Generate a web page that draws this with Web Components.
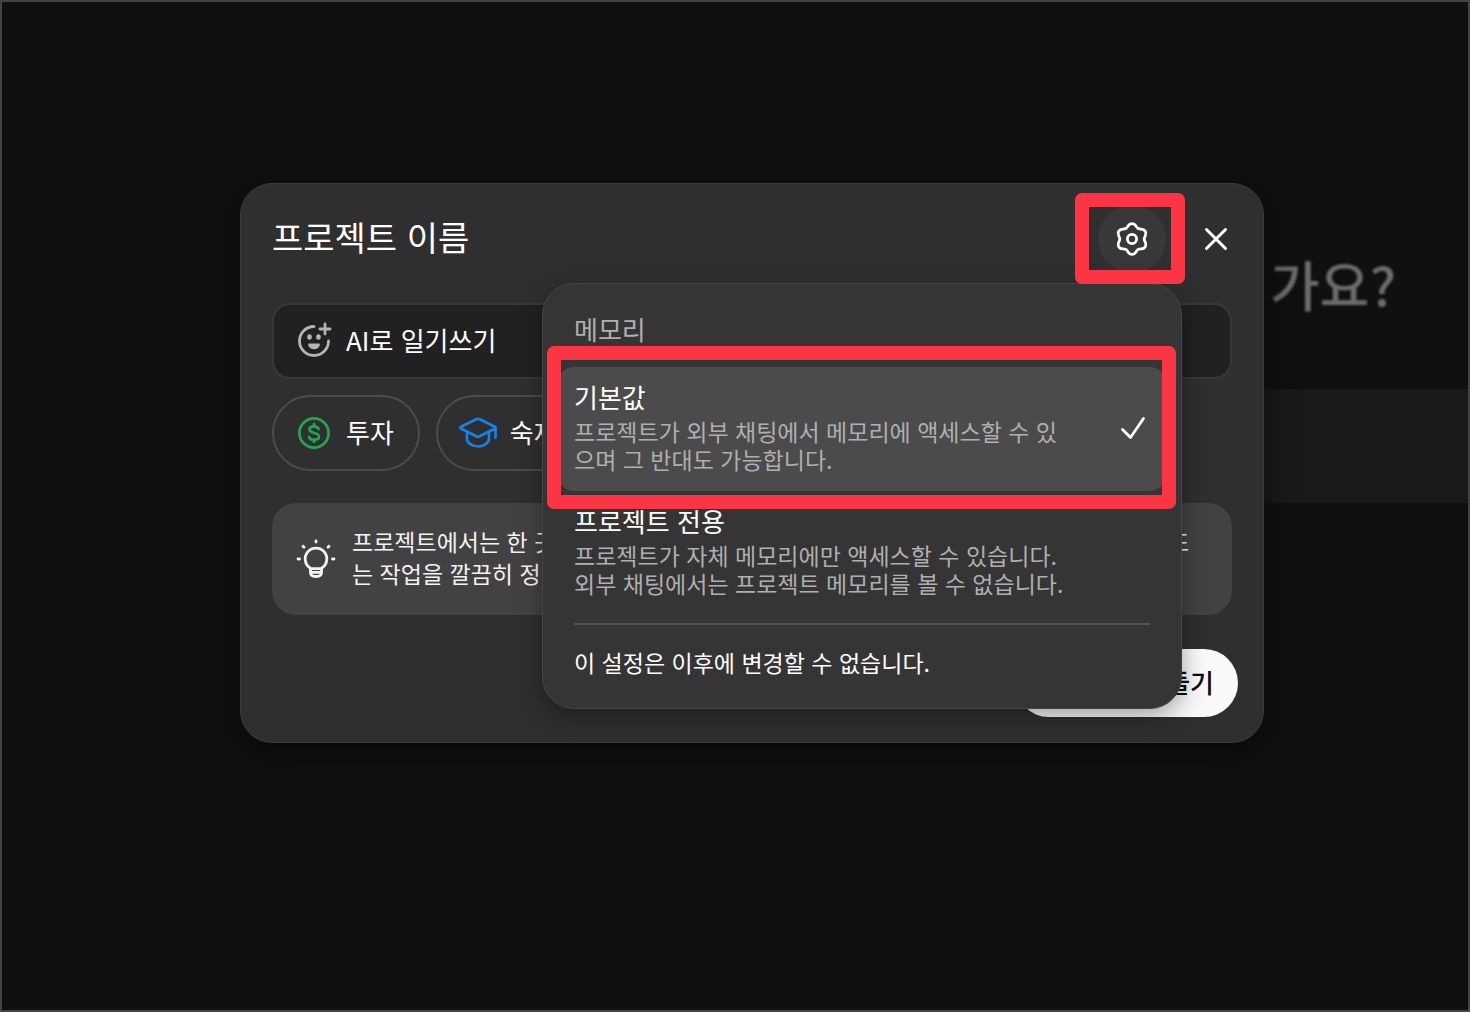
<!DOCTYPE html>
<html lang="ko">
<head>
<meta charset="utf-8">
<meta name="viewport" content="width=device-width, initial-scale=1">
<title>프로젝트 이름</title>
<style>
    * {
        box-sizing: border-box;
    }

    body {
        margin: 0;
        background: #101010;
        color: #fff;
        font-family: "Noto Sans CJK KR", "Noto Sans", sans-serif;
        font-size: 26px;
    }
</style>
</head>
<body>

<project-page>
    <page-backdrop slot="backdrop">가요?</page-backdrop>
    <project-dialog>
        <span slot="title">프로젝트 이름</span>
        <settings-menu slot="settings" title="메모리">
            <memory-option title="기본값" checked>프로젝트가 외부 채팅에서 메모리에 액세스할 수 있으며 그 반대도 가능합니다.</memory-option>
            <memory-option title="프로젝트 전용">프로젝트가 자체 메모리에만 액세스할 수 있습니다. 외부 채팅에서는 프로젝트 메모리를 볼 수 없습니다.</memory-option>
            <span slot="note">이 설정은 이후에 변경할 수 없습니다.</span>
        </settings-menu>
        <name-field value="AI로 일기쓰기"></name-field>
        <chip-list>
            <category-chip icon="money">투자</category-chip>
            <category-chip icon="school">숙제</category-chip>
        </chip-list>
        <tip-card>프로젝트에서는 한 곳에 채팅·파일, 맞춤형 지침을 보관할 수 있습니다. 진행 중인 작업 또는 작업을 깔끔히 정리하는 데 사용하세요.</tip-card>
        <span slot="action">프로젝트 만들기</span>
    </project-dialog>
</project-page>

<script>
const base = `
    * { box-sizing: border-box; }
    button, input { font: inherit; color: inherit; margin: 0; border: 0; background: none; }
    button { cursor: pointer; padding: 0; }
    svg { display: block; flex: none; overflow: visible; fill: none; stroke: currentColor; stroke-linecap: round; stroke-linejoin: round; }
`;

class BaseElement extends HTMLElement {

    constructor() {
        super();
        this.shadow = this.attachShadow({ mode: 'open' });
    }

    connectedCallback() {
        this.render();
    }
}

class ProjectPage extends BaseElement {

    render() {
        this.shadow.innerHTML =
        `
        <style>
            ${base}
            :host {
                display: grid;
                box-sizing: border-box;
                min-height: 100vh;
                border: 2px solid #444;
                overflow: hidden;
            }
            /* The page and the dialog share one cell */
            .layer {
                grid-area: 1 / 1;
                min-width: 0;
            }
            main {
                display: flex;
                justify-content: center;
                align-items: flex-start;
                padding: 181px 0 32px 34px;
            }
        </style>

        <div class="layer"><slot name="backdrop"></slot></div>
        <main class="layer"><slot></slot></main>
        `;
    }
}

class PageBackdrop extends BaseElement {

    render() {
        this.shadow.innerHTML =
        `
        <style>
            ${base}
            :host {
                display: block;
                padding-top: 243px;
            }
            h1 {
                margin: 0 72px 66px 0;
                font-size: 54px;
                font-weight: 500;
                line-height: 78px;
                text-align: right;
                color: #6c6c6c;
                filter: blur(1px);
            }
            .composer {
                height: 114px;
                margin-left: 50%;
                background: #191919;
            }
        </style>

        <h1><slot></slot></h1>
        <div class="composer"></div>
        `;
    }
}

class ProjectDialog extends BaseElement {

    render() {
        this.shadow.innerHTML =
        `
        <style>
            ${base}
            :host {
                position: relative;
                display: block;
                box-sizing: border-box;
                width: 1024px;
                max-width: 100%;
                border: 1px solid #3b3b3b;
                border-radius: 32px;
                background: #2f2f2f;
                box-shadow: 0 8px 32px rgba(0, 0, 0, .5);
            }
            header {
                display: flex;
                align-items: center;
                gap: 16px;
                padding: 21px 13px 30px 31px;
            }
            h2 {
                flex: 1;
                margin: 0;
                padding-bottom: 4px;
                font-size: 34px;
                font-weight: 400;
                line-height: 48px;
            }
            .close {
                display: grid;
                place-items: center;
                width: 68px;
                height: 68px;
            }
            .body {
                padding: 0 31px;
            }
            footer {
                display: flex;
                justify-content: flex-end;
                padding: 34px 25px 25px;
            }
            .create {
                height: 68px;
                padding: 0 24px 4px;
                border-radius: 34px;
                background: #f9f9f9;
                color: #0d0d0d;
                font-weight: 500;
            }
        </style>

        <header>
            <h2><slot name="title"></slot></h2>
            <slot name="settings"></slot>
            <button class="close" type="button" aria-label="닫기">
                <svg width="22" height="22" viewBox="0 0 22 22" stroke-width="3"><path d="M1.5 1.5l19 19M20.5 1.5l-19 19"/></svg>
            </button>
        </header>
        <div class="body"><slot></slot></div>
        <footer>
            <button class="create" type="button"><slot name="action"></slot></button>
        </footer>
        `;
    }
}

class SettingsMenu extends BaseElement {

    render() {
        this.shadow.innerHTML =
        `
        <style>
            ${base}
            :host {
                position: relative;
                display: block;
            }
            .gear {
                display: grid;
                place-items: center;
                width: 68px;
                height: 68px;
                border-radius: 50%;
                background: #383838;
            }
            .mark {
                position: absolute;
                inset: -12px -19px -11px -23px;
                z-index: 3;
                border: 14px solid #fc3544;
                border-radius: 7px;
                pointer-events: none;
            }
            .menu {
                position: absolute;
                top: 78px;
                right: -16px;
                z-index: 2;
                width: 640px;
                padding: 26px 15px 25px;
                border: 1px solid #454545;
                border-radius: 32px;
                background: #353535;
                box-shadow: 0 8px 24px rgba(0, 0, 0, .35);
            }
            h3 {
                margin: 0 0 19px;
                padding: 0 16px;
                font-size: 26px;
                font-weight: 400;
                line-height: 38px;
                color: #afafaf;
            }
            hr {
                height: 2px;
                margin: 8px 16px 16px;
                border: 0;
                background: #515151;
            }
            p {
                margin: 0;
                padding: 0 16px;
                font-size: 23px;
                line-height: 42px;
            }
        </style>

        <button class="gear" type="button" aria-label="설정" aria-expanded="true">
            <svg width="34" height="34" viewBox="0 0 34 34" stroke-width="2.8">
                <path d="M17 1.6C21 1.6 20.5 4.93 23.1 6.43C25.7 7.93 28.34 5.84 30.34 9.3C32.34 12.76 29.2 14 29.2 17C29.2 20 32.34 21.24 30.34 24.7C28.34 28.16 25.7 26.07 23.1 27.57C20.5 29.07 21 32.4 17 32.4C13 32.4 13.5 29.07 10.9 27.57C8.3 26.07 5.66 28.16 3.66 24.7C1.66 21.24 4.8 20 4.8 17C4.8 14 1.66 12.76 3.66 9.3C5.66 5.84 8.3 7.93 10.9 6.43C13.5 4.93 13 1.6 17 1.6z"/>
                <circle cx="17" cy="17" r="4.6"/>
            </svg>
        </button>
        <div class="mark"></div>
        <section class="menu">
            <h3>${this.getAttribute('title')}</h3>
            <div role="menu"><slot></slot></div>
            <hr>
            <p><slot name="note"></slot></p>
        </section>
        `;
    }
}

class MemoryOption extends BaseElement {

    render() {
        const checked = this.hasAttribute('checked');

        this.shadow.innerHTML =
        `
        <style>
            ${base}
            :host {
                position: relative;
                display: block;
            }
            button {
                display: flex;
                align-items: center;
                justify-content: space-between;
                width: 100%;
                padding: 12px 20px 18px 16px;
                border-radius: 16px;
                text-align: left;
            }
            :host([checked]) button {
                background: #4b4b4b;
            }
            .text {
                display: block;
                max-width: 490px;
            }
            .title {
                display: block;
                margin-bottom: 2px;
                line-height: 36px;
            }
            .description {
                display: block;
                font-size: 23px;
                line-height: 28px;
                color: #afafaf;
            }
            .mark {
                position: absolute;
                inset: -21px -10px -18px -11px;
                border: 14px solid #fc3544;
                border-radius: 7px;
                pointer-events: none;
            }
        </style>

        <button type="button" role="menuitemradio" aria-checked="${checked}">
            <span class="text">
                <span class="title">${this.getAttribute('title')}</span>
                <span class="description"><slot></slot></span>
            </span>
            ${checked ? '<svg width="26" height="24" viewBox="0 0 26 24" stroke-width="2.8"><path d="M2.5 15.5l8 8L23.500 4.500"/></svg>' : ''}
        </button>
        ${checked ? '<div class="mark"></div>' : ''}
        `;
    }
}

class NameField extends BaseElement {

    render() {
        this.shadow.innerHTML =
        `
        <style>
            ${base}
            :host {
                display: block;
            }
            label {
                display: flex;
                align-items: center;
                gap: 14px;
                height: 76px;
                padding: 0 22px;
                border: 2px solid #383838;
                border-radius: 18px;
                background: #212121;
            }
            svg {
                color: #b4b4b4;
            }
            input {
                flex: 1;
                min-width: 0;
                height: 48px;
                padding: 0 0 4px;
                outline: 0;
            }
        </style>

        <label>
            <svg width="36" height="36" viewBox="0 0 36 36" stroke-width="2.8">
                <path d="M18 3.5A14.500 14.500 0 1 0 32.500 18M29 1v10M24 6h10"/>
                <g fill="currentColor" stroke="none">
                    <ellipse cx="13.5" cy="14" rx="2.3" ry="2.8"/>
                    <ellipse cx="22.5" cy="14" rx="2.3" ry="2.8"/>
                    <path d="M13.500 20.500h9c1 0 1.500.6 1.300 1.500-1 5.600-10.600 5.600-11.600 0-.2-.9.300-1.500 1.300-1.500z"/>
                </g>
            </svg>
            <input type="text" aria-label="프로젝트 이름" value="${this.getAttribute('value')}">
        </label>
        `;
    }
}

class ChipList extends BaseElement {

    render() {
        this.shadow.innerHTML =
        `
        <style>
            :host {
                display: flex;
                flex-wrap: wrap;
                gap: 16px;
                margin: 16px 0 32px;
            }
        </style>

        <slot></slot>
        `;
    }
}

class CategoryChip extends BaseElement {

    static icons = {
        money: `
            <g stroke-width="2.7">
                <circle cx="16" cy="16" r="14.6"/>
                <path d="M20.5 12c-.6-1.700-2.300-2.600-4.500-2.600-2.600 0-4.500 1.100-4.500 3.200 0 4.500 9.500 2.200 9.500 6.900 0 2.100-2.200 3.300-5 3.300-2.500 0-4.500-1.100-5-3M16 7v2.400M16 22.800V25"/>
            </g>`,
        school: `
            <path stroke-width="2.7" d="M-1 9.700L14.300 2.200q1.700-.8 3.400 0L33 9.700q1.500.9 0 1.800L17.700 19.200q-1.700.8-3.400 0L-1 11.500q-1.500-.9 0-1.800zM33.500 11.200v9.500M5 15v7c0 3.500 5.500 7.500 11 7.500S27 25.500 27 22v-7"/>`
    };

    static colors = { money: '#22a652', school: '#1682e8' };

    render() {
        const icon = this.getAttribute('icon');

        this.shadow.innerHTML =
        `
        <style>
            ${base}
            :host {
                display: block;
            }
            button {
                display: flex;
                align-items: center;
                gap: 16px;
                height: 76px;
                padding: 0 24px;
                border: 2px solid #4c4c4c;
                border-radius: 38px;
            }
            svg {
                color: ${CategoryChip.colors[icon]};
            }
            span {
                padding-bottom: 4px;
            }
        </style>

        <button type="button">
            <svg width="32" height="32" viewBox="0 0 32 32">${CategoryChip.icons[icon]}</svg>
            <span><slot></slot></span>
        </button>
        `;
    }
}

class TipCard extends BaseElement {

    render() {
        this.shadow.innerHTML =
        `
        <style>
            ${base}
            :host {
                display: flex;
                align-items: center;
                gap: 16px;
                padding: 22px 32px 22px 24px;
                border-radius: 24px;
                background: #424242;
                color: #f3f3f3;
            }
            p {
                margin: 0;
                padding-bottom: 4px;
                font-size: 23px;
                line-height: 32px;
            }
        </style>

        <svg width="40" height="40" viewBox="0 0 40 40" stroke-width="2.8">
            <path d="M14.500 29.200a10.800 10.800 0 1 1 11 0v4.300c0 2.500-2.200 4-5.500 4s-5.500-1.500-5.500-4zM14.500 29.700h11M15 33.400h10M20 2v1M7 7.200l1 1M33 7.200l-1 1M2 20h1.500M36.500 20H38"/>
        </svg>
        <p><slot></slot></p>
        `;
    }
}

customElements.define('project-page', ProjectPage);
customElements.define('page-backdrop', PageBackdrop);
customElements.define('project-dialog', ProjectDialog);
customElements.define('settings-menu', SettingsMenu);
customElements.define('memory-option', MemoryOption);
customElements.define('name-field', NameField);
customElements.define('chip-list', ChipList);
customElements.define('category-chip', CategoryChip);
customElements.define('tip-card', TipCard);
</script>
</body>
</html>
